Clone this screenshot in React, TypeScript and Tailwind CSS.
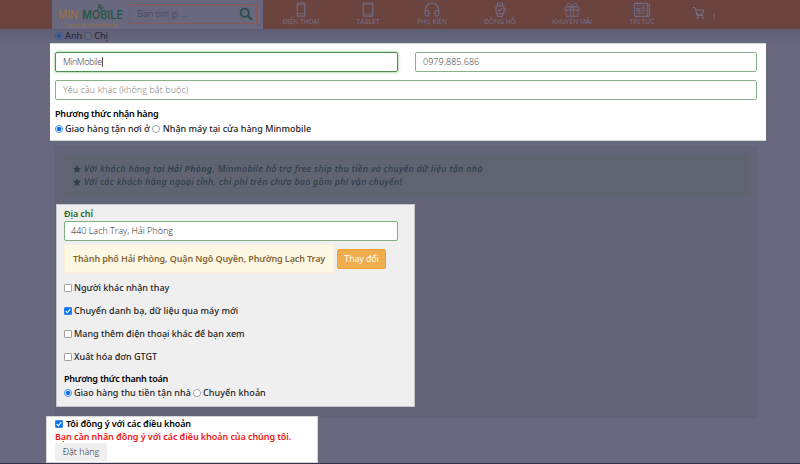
import type { ReactNode } from "react";

function Radio({ on = false, dim = false }: { on?: boolean; dim?: boolean }) {
  return (
    <svg viewBox="0 0 8 8" className={`block size-2 shrink-0 ${dim ? "opacity-80" : ""}`}>
      <circle cx="4" cy="4" r="3.55" fill={dim ? "#6b6b82" : "#fff"} stroke={on ? (dim ? "#294e99" : "#1673ee") : dim ? "#46465c" : "#858585"} strokeWidth=".75" />
      {on && <circle cx="4" cy="4" r="2.3" fill={dim ? "#214ca0" : "#0b6ff0"} />}
    </svg>
  );
}

function Check({ on = false }: { on?: boolean }) {
  return (
    <svg viewBox="0 0 8 8" className="block size-2 shrink-0">
      <rect x=".4" y=".4" width="7.2" height="7.2" rx="1" fill={on ? "#0874ef" : "#fff"} stroke={on ? "#0874ef" : "#777"} strokeWidth=".75" />
      {on && <path d="M1.7 4.2 3.3 5.7 6.4 2.1" fill="none" stroke="#fff" strokeWidth="1.1" />}
    </svg>
  );
}

function Star() {
  return (
    <svg viewBox="0 0 16 16" className="block size-2 shrink-0" fill="#303d4d">
      <path d="m8 0 2.4 5.3 5.6.6-4.2 3.9L13 16l-5-3-5 3 1.2-6.2L0 5.9l5.6-.6Z" />
    </svg>
  );
}

function Label({ children, className = "font-medium" }: { children: ReactNode; className?: string }) {
  return <span className={`whitespace-nowrap text-[9px] leading-3 ${className}`}>{children}</span>;
}

function NavItem({ label, width, children }: { label: string; width: string; children: ReactNode }) {
  return (
    <div className={`flex shrink-0 flex-col items-center ${width}`}>
      <svg viewBox="0 0 18 16" className="mt-[1.5px] h-4 w-[18px]" fill="none" stroke="#6f6b84" strokeWidth="1.2">
        {children}
      </svg>
      <span className="whitespace-nowrap font-['Open_Sans',sans-serif] text-[6.6px] leading-2">{label}</span>
    </div>
  );
}

function Header() {
  return (
    <header className="flex h-[29px] shrink-0 bg-[#6b433f] pl-[52px] text-[#77738a] shadow-[0_1px_5px_#4c4d6380]">
      <div className="flex w-[211px] shrink-0 bg-[#68677d]">
        <svg viewBox="0 0 77 29" className="h-[29px] w-[77px] shrink-0" fill="none">
          <text x="6" y="18.8" fill="#94704c" fontFamily="Inter, sans-serif" fontSize="11.5" fontWeight="600" textLength="20" lengthAdjust="spacingAndGlyphs">MIN</text>
          <text x="30" y="18.8" fill="#285647" fontFamily="Inter, sans-serif" fontSize="11.5" fontWeight="600" textLength="41" lengthAdjust="spacingAndGlyphs">MOBILE</text>
          <path d="M46 10V7.3l3 .2V10M46 6.2c2-.1 3.2 1 3.3 3M46 4.7c2.9-.1 4.8 1.5 4.9 4.3" stroke="#285647" strokeWidth="1" />
          <text x="12.5" y="26.5" fill="#94704c" fontFamily="Open Sans, sans-serif" fontSize="4.7" fontWeight="600" fontStyle="italic" textLength="53" lengthAdjust="spacingAndGlyphs">Trao uy tín, Nhận niềm tin</text>
        </svg>
        <div className="mt-1 flex h-5 w-32 items-center justify-between border border-[#8c5752] pl-[7px] pr-[3px]">
          <span className="whitespace-nowrap font-['Open_Sans',sans-serif] text-[9.5px] font-light tracking-[-.1px] text-[#3e3e52]">Bạn tìm gì ...</span>
          <svg viewBox="0 0 14 14" className="size-[14px]" fill="none" stroke="#244f48" strokeWidth="1.8">
            <circle cx="5.7" cy="5.7" r="4.1" />
            <path d="m8.8 8.8 4 4" strokeWidth="2.2" />
          </svg>
        </div>
      </div>
      <nav className="flex pl-[4px]">
        <NavItem label="ĐIỆN THOẠI" width="w-[68px]"><rect x="5.2" y="1.2" width="7.6" height="13" rx="1" /><path d="M5.2 11.7h7.6M5.2 2.7h7.6" strokeWidth=".8" /></NavItem>
        <NavItem label="TABLET" width="w-[66px]"><rect x="4.2" y="1.2" width="9.6" height="13" rx="1" /><path d="M4.2 12h9.6M4.2 2.4h9.6" strokeWidth=".8" /></NavItem>
        <NavItem label="PHỤ KIỆN" width="w-[62px]"><path d="M2.3 10.2V7.7a6.7 6.7 0 0 1 13.4 0v2.5M5.7 8.5H4a1.8 1.8 0 0 0-1.8 1.8v1.9A1.8 1.8 0 0 0 4 14h1.7V8.5Zm6.6 0H14a1.8 1.8 0 0 1 1.8 1.8v1.9A1.8 1.8 0 0 1 14 14h-1.7V8.5Z" /></NavItem>
        <NavItem label="ĐỒNG HỒ" width="w-[74px]"><rect x="5" y="3.8" width="8" height="8" rx="2" /><path d="M6.5 3.8V1h5v2.8M6.5 11.8v2.7h5v-2.7M7 7.8l1.4 1.3 2.5-2.7M13.2 6.5h1v2h-1" /></NavItem>
        <NavItem label="KHUYẾN MÃI" width="w-[70px]"><path d="M2 5h14v3H2zm1 3v6.3h12V8M7.5 5v9.3m3-9.3v9.3M9 5C4 4.8 3.5 3.8 4.3 2.2 5.5.2 8 2 9 5Zm0 0c5-.2 5.5-1.2 4.7-2.8C12.5.2 10 2 9 5Z" strokeWidth="1" /></NavItem>
        <NavItem label="TIN TỨC" width="w-[70px]"><path d="M1.5 1.3h12.8v13H2.5a1 1 0 0 1-1-1v-12Zm12.8 1.2h2v10.8a1 1 0 0 1-2 0M4 4h3M8.5 4H12M8.5 6.2H12M8.5 8.5H12M4 11h8M4 6.5h2.8v2.3H4z" /></NavItem>
      </nav>
      <svg viewBox="0 0 14 14" className="ml-[15px] mt-[6px] size-[14px]" fill="none" stroke="#77738a" strokeWidth="1">
        <path d="M1 1.5h2l2.2 8h6M3.6 4H12l-1.4 4H4.7" /><circle cx="5.7" cy="11.8" r=".8" /><circle cx="10.7" cy="11.8" r=".8" />
      </svg>
      <span className="ml-[6px] mt-[12px] font-['Open_Sans',sans-serif] text-[7.5px] leading-2">1</span>
    </header>
  );
}

export default function App() {
  return (
    <div className="flex h-[464px] w-[800px] flex-col overflow-hidden bg-[#68687e] font-['Noto_Sans',sans-serif] text-[#222]">
      <Header />
      <div className="flex h-[14px] shrink-0 items-center gap-0.5 bg-linear-to-b from-[#5d5e75] to-[#68687e] pl-[55px] text-[#292a3c]">
        <Radio on dim /><Label>Anh</Label><Radio dim /><Label>Chị</Label>
      </div>
      <section className="ml-[50px] flex h-[98px] w-[716px] shrink-0 flex-col border-y border-[#d5d5dc] bg-white px-[5px] pt-2">
        <div className="flex gap-[17px] font-['Open_Sans',sans-serif] text-[9px] font-light text-[#333]">
          <div className="flex h-[20px] w-[343px] items-center rounded-[2px] border border-[#4b914e] pl-[7px] shadow-[0_0_3px_#77b978]"><span className="tracking-[-.42px]">MinMobile</span><i className="h-2.5 w-px bg-[#555]" /></div>
          <div className="flex h-[20px] w-[342px] items-center rounded-[2px] border border-[#88b18a] pl-[7px]"><span className="tracking-[.05px]">0979.885.686</span></div>
        </div>
        <div className="mt-2 flex h-[20px] w-[702px] items-center rounded-[2px] border border-[#88b18a] pl-[7px] font-['Open_Sans',sans-serif] text-[9px] font-light tracking-[.08px] text-[#777]">Yêu cầu khác (không bắt buộc)</div>
        <Label className="mt-2 font-semibold tracking-[-.19px] text-black">Phương thức nhận hàng</Label>
        <div className="mt-[3px] flex items-center gap-0.5"><Radio on /><Label>Giao hàng tận nơi ở</Label><Radio /><Label className="pl-px font-medium">Nhận máy tại cửa hàng Minmobile</Label></div>
      </section>
      <main className="ml-[55px] mt-[5px] h-[272px] w-[702px] shrink-0 bg-[#646478] pt-2">
        <div className="ml-[9px] flex h-[42px] w-[685px] flex-col gap-px rounded-[2px] border border-[#60646e] bg-[#606470] pl-[8px] pt-2 text-[#303d4d]">
          <div className="flex h-3 items-center gap-[3px]"><Star /><Label className="font-medium tracking-[.255px] italic">Với khách hàng tại <b className="font-semibold">Hải Phòng</b>, Minmobile hỗ trợ free ship thu tiền và chuyển dữ liệu tận nhà</Label></div>
          <div className="flex h-3 items-center gap-[3px]"><Star /><Label className="font-medium tracking-[.235px] italic">Với các khách hàng ngoại tỉnh, chi phí trên chưa bao gồm phí vận chuyển!</Label></div>
        </div>
        <section className="ml-px mt-2 flex h-[203px] w-[359px] flex-col border border-[#c5c5cb] bg-[#efefef] pl-[7px] pt-[3px]">
          <Label className="font-semibold tracking-[-.1px] text-[#236829]">Địa chỉ</Label>
          <div className="mt-px flex h-[20px] w-[334px] shrink-0 items-center rounded-[2px] border border-[#82ae85] bg-white pl-[6px] font-['Open_Sans',sans-serif] text-[9px] font-light text-[#222]">440 Lạch Tray, Hải Phòng</div>
          <div className="mt-[3px] flex h-[29px] shrink-0 items-center gap-[3px]">
            <div className="flex h-[29px] w-[270px] items-center rounded-[2px] border border-[#fbefd9] bg-[#fcf8e3] pl-[8px]"><Label className="font-semibold tracking-[-.12px] text-[#856536]">Thành phố Hải Phòng, Quận Ngô Quyền, Phường Lạch Tray</Label></div>
            <div className="flex h-[20px] w-[49px] items-center justify-center rounded-[2px] border border-[#eea236] bg-[#f0ad4e] font-['Open_Sans',sans-serif] text-[9px] tracking-[-.15px] text-white">Thay đổi</div>
          </div>
          <div className="mt-[9px] flex h-3 items-center gap-0.5"><Check /><Label>Người khác nhận thay</Label></div>
          <div className="mt-[11px] flex h-3 items-center gap-0.5"><Check on /><Label className="font-medium tracking-[.03px]">Chuyển danh bạ, dữ liệu qua máy mới</Label></div>
          <div className="mt-[11px] flex h-3 items-center gap-0.5"><Check /><Label>Mang thêm điện thoại khác để bạn xem</Label></div>
          <div className="mt-[11px] flex h-3 items-center gap-0.5"><Check /><Label>Xuất hóa đơn GTGT</Label></div>
          <Label className="mt-[10px] font-semibold tracking-[-.22px] text-black">Phương thức thanh toán</Label>
          <div className="mt-[2px] flex items-center gap-0.5"><Radio on /><Label className="font-medium tracking-[.06px]">Giao hàng thu tiền tận nhà</Label><Radio /><Label className="font-medium tracking-[.08px]">Chuyển khoản</Label></div>
        </section>
      </main>
      <section className="-mt-[2px] ml-[46px] flex h-[47px] w-[272px] shrink-0 flex-col border border-[#d4d4da] bg-white pl-[8px] pt-px">
        <div className="flex items-center gap-[3px]"><Check on /><Label className="font-semibold tracking-[-.13px] text-black">Tôi đồng ý với các điều khoản</Label></div>
        <Label className="mt-px font-semibold tracking-[-.07px] text-[#f21414]">Bạn cần nhấn đồng ý với các điều khoản của chúng tôi.</Label>
        <div className="flex h-[18px] w-[52px] shrink-0 items-center justify-center rounded-[2px] bg-[#efefef] font-['Open_Sans',sans-serif] text-[9px] font-light">Đặt hàng</div>
      </section>
      <div className="h-px shrink-0 bg-[#373446]" />
    </div>
  );
}
